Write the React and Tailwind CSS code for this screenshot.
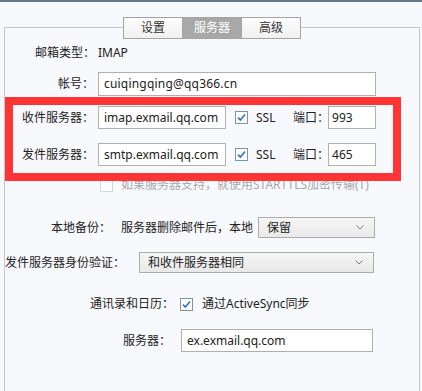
import { useState } from "react";

function CheckBox({ checked, disabled }) {
  return (
    <svg width="13" height="13" viewBox="0 0 13 13" className="shrink-0">
      <rect
        x="0.5"
        y="0.5"
        width="12"
        height="12"
        fill="#ffffff"
        stroke={disabled ? "#d4d6da" : "#7f93ad"}
      />
      {checked && (
        <path
          d="M3 6.6 L5.4 9 L10 3.6"
          fill="none"
          stroke="#2f6fbf"
          strokeWidth="1.6"
        />
      )}
    </svg>
  );
}

function Select({ value, width }) {
  return (
    <div
      className={`${width} h-[21px] flex items-center justify-between pl-[8px] pr-[10px] border border-[#acacac] bg-gradient-to-b from-[#f6f6f6] to-[#e9e9e9] text-[#222]`}
    >
      <span>{value}</span>
      <svg width="8" height="5" viewBox="0 0 8 5">
        <path d="M0.5 0.5 L4 4 L7.5 0.5" fill="none" stroke="#7a7a7a" />
      </svg>
    </div>
  );
}

export default function App() {
  const [tab, setTab] = useState("服务器");
  const tabs = ["设置", "服务器", "高级"];

  return (
    <div className="relative w-[422px] h-[391px] overflow-hidden bg-[#f8f9fd] text-[12px] leading-[16px] text-[#222] font-['Noto_Sans','Noto_Sans_CJK_SC',sans-serif]">
      {/* top edge */}
      <div className="h-[2px] bg-[#64788c]" />

      {/* group box */}
      <div className="ml-[4px] mt-[25px] w-[416px] h-[380px] border border-[#c3c5c9] bg-[#f8f9fd]">
        {/* tabs */}
        <div className="-mt-[11px] ml-[118px] flex">
          {tabs.map((t, i) => (
            <button
              key={t}
              onClick={() => setTab(t)}
              className={`w-[60px] h-[22px] flex items-center justify-center border border-[#a4a4a4] ${
                i > 0 ? "-ml-px" : ""
              } ${
                tab === t
                  ? "bg-[#a8a8a8] text-white"
                  : "bg-gradient-to-b from-[#fdfdfd] to-[#f0f0f0] text-[#333]"
              }`}
            >
              {t}
            </button>
          ))}
        </div>

        {/* 邮箱类型 */}
        <div className="mt-[5px] h-[18px] flex items-center">
          <span className="w-[90px] text-right">邮箱类型：</span>
          <span className="ml-[3px]">IMAP</span>
        </div>

        {/* 帐号 */}
        <div className="mt-[10px] h-[24px] flex items-center">
          <span className="w-[89px] text-right">帐号：</span>
          <div className="ml-[4px] w-[278px] h-[24px] flex items-center pl-[5px] border border-[#b0b0b0] bg-white tracking-[0.2px]">
            cuiqingqing@qq366.cn
          </div>
        </div>

        {/* 收件服务器 */}
        <div className="mt-[10px] h-[23px] flex items-center">
          <span className="w-[89px] text-right">收件服务器：</span>
          <div className="ml-[4px] w-[128px] h-[23px] flex items-center pl-[5px] border border-[#b0b0b0] bg-white">
            imap.exmail.qq.com
          </div>
          <div className="ml-[9px]">
            <CheckBox checked />
          </div>
          <span className="ml-[8px] w-[37px]">SSL</span>
          <span>端口：</span>
          <div className="-ml-[1px] w-[48px] h-[23px] flex items-center pl-[3px] border border-[#b0b0b0] bg-white">
            993
          </div>
        </div>

        {/* 发件服务器 */}
        <div className="mt-[14px] h-[23px] flex items-center">
          <span className="w-[89px] text-right">发件服务器：</span>
          <div className="ml-[4px] w-[128px] h-[23px] flex items-center pl-[5px] border border-[#b0b0b0] bg-white">
            smtp.exmail.qq.com
          </div>
          <div className="ml-[9px]">
            <CheckBox checked />
          </div>
          <span className="ml-[8px] w-[37px]">SSL</span>
          <span>端口：</span>
          <div className="-ml-[1px] w-[48px] h-[23px] flex items-center pl-[3px] border border-[#b0b0b0] bg-white">
            465
          </div>
        </div>

        {/* STARTTLS */}
        <div className="mt-[11px] h-[16px] flex items-center pl-[95px] text-[#a8a8a8]">
          <CheckBox disabled />
          <span className="ml-[8px]">如果服务器支持，就使用STARTTLS加密传输(T)</span>
        </div>

        {/* 本地备份 */}
        <div className="mt-[24px] h-[21px] flex items-center pl-[46px]">
          <span>本地备份：</span>
          <span className="ml-[10px]">服务器删除邮件后，本地</span>
          <div className="ml-[5px]">
            <Select value="保留" width="w-[117px]" />
          </div>
        </div>

        {/* 发件服务器身份验证 */}
        <div className="mt-[14px] h-[21px] flex items-center">
          <span>发件服务器身份验证：</span>
          <div className="ml-[14px]">
            <Select value="和收件服务器相同" width="w-[235px]" />
          </div>
        </div>

        {/* 通讯录和日历 */}
        <div className="mt-[22px] h-[18px] flex items-center pl-[85px]">
          <span>通讯录和日历：</span>
          <div className="ml-[6px]">
            <CheckBox checked />
          </div>
          <span className="ml-[9px]">通过ActiveSync同步</span>
        </div>

        {/* 服务器 */}
        <div className="mt-[16px] h-[23px] flex items-center pl-[118px]">
          <span>服务器：</span>
          <div className="ml-[10px] w-[192px] h-[23px] flex items-center pl-[5px] border border-[#b0b0b0] bg-white">
            ex.exmail.qq.com
          </div>
        </div>
      </div>

      {/* annotation frame */}
      <div className="absolute left-[5px] top-[97px] w-[396px] h-[84px] border-[8px] border-[#ff3434] pointer-events-none" />
    </div>
  );
}
